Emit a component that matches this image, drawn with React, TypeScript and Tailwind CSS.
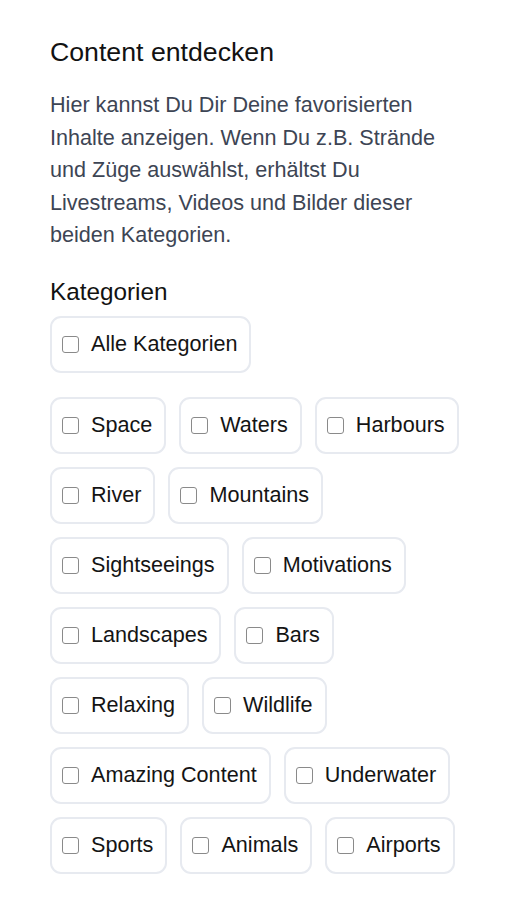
import { useState } from 'react';

const categories = [
  'Space',
  'Waters',
  'Harbours',
  'River',
  'Mountains',
  'Sightseeings',
  'Motivations',
  'Landscapes',
  'Bars',
  'Relaxing',
  'Wildlife',
  'Amazing Content',
  'Underwater',
  'Sports',
  'Animals',
  'Airports',
];

function CategoryChip({ label, checked, onToggle }: { label: string; checked: boolean; onToggle: () => void }) {
  return (
    <button
      onClick={onToggle}
      className="h-[57px] flex items-center gap-3 pl-[10px] pr-[12px] border-2 border-[#e7eaf0] rounded-[11px] bg-white text-[#141414] text-[21.6px] leading-none whitespace-nowrap cursor-pointer"
    >
      <span
        className={`w-[17px] h-[17px] shrink-0 rounded-[3px] border-[1.5px] flex items-center justify-center ${
          checked ? 'bg-[#2563eb] border-[#2563eb]' : 'border-[#8a8a8a] bg-white'
        }`}
      >
        {checked && (
          <svg viewBox="0 0 12 12" className="w-3 h-3" fill="none" stroke="white" strokeWidth="2">
            <path d="M2.5 6.2l2.3 2.3 4.7-5" />
          </svg>
        )}
      </span>
      {label}
    </button>
  );
}

export default function App() {
  const [selected, setSelected] = useState<string[]>([]);

  const toggle = (name: string) => {
    setSelected((prev) => (prev.includes(name) ? prev.filter((c) => c !== name) : [...prev, name]));
  };

  return (
    <div className="min-h-screen bg-white px-[50px] pt-[35px] pb-10 font-['Liberation_Sans',Arial,sans-serif]">
      <h1 className="text-[26.7px] leading-[35px] text-[#121212]">Content entdecken</h1>

      <p className="mt-[19px] text-[21.6px] leading-[32.5px] text-[#3d4554] max-w-[400px]">
        Hier kannst Du Dir Deine favorisierten Inhalte anzeigen. Wenn Du z.B. Strände und Züge auswählst, erhältst Du
        Livestreams, Videos und Bilder dieser beiden Kategorien.
      </p>

      <h2 className="mt-[24px] text-[24.3px] leading-[32px] text-[#121212]">Kategorien</h2>

      <div className="mt-[8px] flex">
        <CategoryChip
          label="Alle Kategorien"
          checked={selected.length === categories.length}
          onToggle={() => setSelected(selected.length === categories.length ? [] : [...categories])}
        />
      </div>

      {/* Category list */}
      <div className="mt-[24px] w-[418px] flex flex-wrap gap-x-[13px] gap-y-[13px]">
        {categories.map((c) => (
          <CategoryChip key={c} label={c} checked={selected.includes(c)} onToggle={() => toggle(c)} />
        ))}
      </div>
    </div>
  );
}
